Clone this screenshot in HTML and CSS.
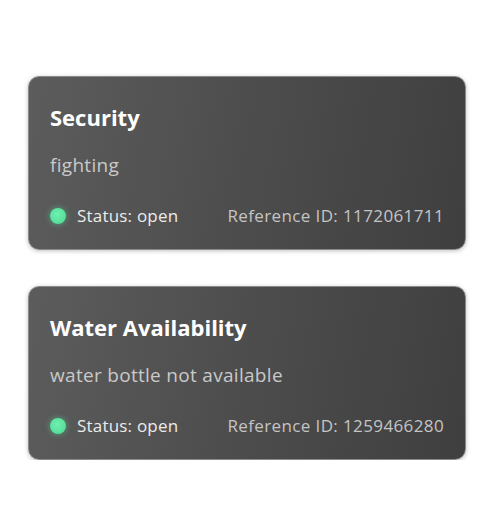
FILE: index.html
```html
<!DOCTYPE html>
<html>
<head>
<meta charset="utf-8">
<link rel="stylesheet" href="styles.css">
</head>
<body>
<div class="list">
  <div class="card">
    <div class="title">Security</div>
    <div class="desc">fighting</div>
    <div class="footer">
      <div class="status"><span class="dot"></span><span>Status: open</span></div>
      <div class="ref">Reference ID: 1172061711</div>
    </div>
  </div>
  <div class="card">
    <div class="title">Water Availability</div>
    <div class="desc">water bottle not available</div>
    <div class="footer">
      <div class="status"><span class="dot"></span><span>Status: open</span></div>
      <div class="ref">Reference ID: 1259466280</div>
    </div>
  </div>
</div>
</body>
</html>
```
FILE: styles.css
```css
html, body {
  margin: 0;
  padding: 0;
  background: #ffffff;
}
body {
  font-family: "Open Sans", "Noto Sans", sans-serif;
}
.list {
  display: flex;
  flex-direction: column;
  gap: 36px;
  padding: 76px 28px 0 28px;
}
.card {
  box-sizing: border-box;
  height: 174px;
  border-radius: 11px;
  background: linear-gradient(100deg, #5c5c5c 0%, #4b4b4b 55%, #3f3f3f 100%);
  border: 1px solid #8a8a8a;
  box-shadow: 0 1px 4px rgba(0,0,0,0.25);
  padding: 25px 21px 0 21px;
  display: flex;
  flex-direction: column;
}
.title {
  color: #ffffff;
  font-weight: 700;
  font-size: 22px;
  line-height: 30px;
}
.desc {
  color: #c9c9c9;
  font-size: 19px;
  letter-spacing: 0.3px;
  line-height: 24px;
  margin-top: 21px;
}
.footer {
  margin-top: 28px;
  display: flex;
  justify-content: space-between;
  align-items: center;
  font-size: 17px;
  line-height: 22px;
}
.status {
  display: flex;
  align-items: center;
  gap: 11px;
  color: #ececec;
  letter-spacing: 0.2px;
}
.dot {
  width: 16px;
  height: 16px;
  border-radius: 50%;
  background: radial-gradient(circle at 45% 40%, #6ff0b0 0%, #56de9a 70%, #4cc98b 100%);
  box-shadow: 0 0 6px rgba(90, 230, 160, 0.55);
}
.ref {
  color: #c4c4c4;
  letter-spacing: 0.38px;
}
```
